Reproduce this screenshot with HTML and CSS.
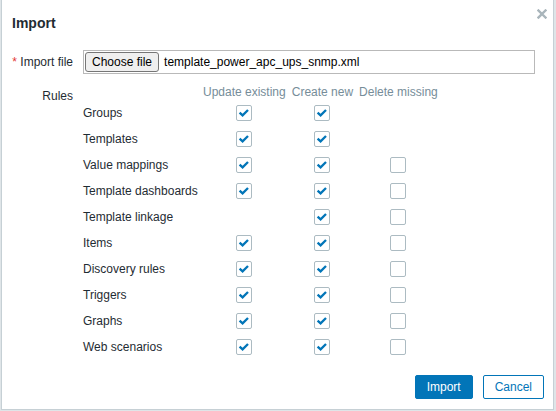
FILE: index.html
```html
<!DOCTYPE html>
<html>
<head>
<meta charset="utf-8">
<link rel="stylesheet" href="styles.css">
</head>
<body>
<div class="dialog">
  <div class="header">
    <h4 class="title">Import</h4>
    <button class="close" aria-label="Close">
      <svg width="10" height="10" viewBox="0 0 10 10"><path d="M1.5 1.5 L8.5 8.5 M8.5 1.5 L1.5 8.5" stroke="#a9b5bb" stroke-width="2.4" stroke-linecap="square"/></svg>
    </button>
  </div>
  <div class="body">
    <div class="form">
      <div class="label"><span class="req">*</span> Import file</div>
      <div class="field">
        <div class="file">
          <span class="choose">Choose file</span>
          <span class="fname">template_power_apc_ups_snmp.xml</span>
        </div>
      </div>
      <div class="label rules-label">Rules</div>
      <div class="field">
        <div class="rules">
          <div class="rh"></div>
          <div class="rh col">Update existing</div>
          <div class="rh col">Create new</div>
          <div class="rh col">Delete missing</div>

          <div class="rl">Groups</div>
          <div class="rc"><span class="cb on"></span></div>
          <div class="rc"><span class="cb on"></span></div>
          <div class="rc"></div>

          <div class="rl">Templates</div>
          <div class="rc"><span class="cb on"></span></div>
          <div class="rc"><span class="cb on"></span></div>
          <div class="rc"></div>

          <div class="rl">Value mappings</div>
          <div class="rc"><span class="cb on"></span></div>
          <div class="rc"><span class="cb on"></span></div>
          <div class="rc"><span class="cb"></span></div>

          <div class="rl">Template dashboards</div>
          <div class="rc"><span class="cb on"></span></div>
          <div class="rc"><span class="cb on"></span></div>
          <div class="rc"><span class="cb"></span></div>

          <div class="rl">Template linkage</div>
          <div class="rc"></div>
          <div class="rc"><span class="cb on"></span></div>
          <div class="rc"><span class="cb"></span></div>

          <div class="rl">Items</div>
          <div class="rc"><span class="cb on"></span></div>
          <div class="rc"><span class="cb on"></span></div>
          <div class="rc"><span class="cb"></span></div>

          <div class="rl">Discovery rules</div>
          <div class="rc"><span class="cb on"></span></div>
          <div class="rc"><span class="cb on"></span></div>
          <div class="rc"><span class="cb"></span></div>

          <div class="rl">Triggers</div>
          <div class="rc"><span class="cb on"></span></div>
          <div class="rc"><span class="cb on"></span></div>
          <div class="rc"><span class="cb"></span></div>

          <div class="rl">Graphs</div>
          <div class="rc"><span class="cb on"></span></div>
          <div class="rc"><span class="cb on"></span></div>
          <div class="rc"><span class="cb"></span></div>

          <div class="rl">Web scenarios</div>
          <div class="rc"><span class="cb on"></span></div>
          <div class="rc"><span class="cb on"></span></div>
          <div class="rc"><span class="cb"></span></div>
        </div>
      </div>
    </div>
  </div>
  <div class="footer">
    <button class="btn primary">Import</button>
    <button class="btn secondary">Cancel</button>
  </div>
</div>
</body>
</html>
```
FILE: styles.css
```css
html, body {
  margin: 0;
  padding: 0;
}
body {
  background: #dfe5e8;
  font-family: "Liberation Sans", Arial, sans-serif;
  font-size: 12px;
  color: #1f2c33;
  height: 411px;
  overflow: hidden;
}
.dialog {
  box-sizing: border-box;
  width: 553px;
  margin-left: 1px;
  background: #ffffff;
  border: 1px solid #c6d0d5;
  border-top: 0;
}
.header {
  position: relative;
  padding: 14px 10px 0;
}
.title {
  margin: 0;
  font-size: 14px;
  font-weight: bold;
  line-height: 18px;
  color: #1f2c33;
}
.close {
  position: absolute;
  top: 8px;
  right: 5px;
  width: 12px;
  height: 12px;
  padding: 1px;
  border: 0;
  background: transparent;
  line-height: 0;
}
.body {
  padding: 18px 10px 0;
}
.form {
  display: grid;
  grid-template-columns: 61px 1fr;
  column-gap: 10px;
  row-gap: 10px;
}
.label {
  text-align: right;
  line-height: 14px;
  padding-top: 5px;
  white-space: nowrap;
}
.req {
  color: #e33734;
}
.file {
  box-sizing: border-box;
  width: 452px;
  height: 24px;
  border: 1px solid #b9b9b9;
  padding: 1px;
  display: flex;
  align-items: center;
}
.choose {
  box-sizing: border-box;
  height: 20px;
  line-height: 18px;
  padding: 0 6px;
  background: #efefef;
  border: 1px solid #767676;
  border-radius: 3px;
  color: #000000;
}
.fname {
  margin-left: 5px;
  color: #000000;
}
.rules {
  display: grid;
  grid-template-columns: 114px auto auto auto;
  column-gap: 6px;
  justify-content: start;
}
.rh {
  line-height: 16px;
  color: #768d99;
  white-space: nowrap;
}
.col {
  text-align: center;
}
.rl {
  height: 26px;
  line-height: 26px;
  white-space: nowrap;
}
.rc {
  height: 26px;
  display: flex;
  align-items: center;
  justify-content: center;
}
.cb {
  box-sizing: border-box;
  width: 16px;
  height: 16px;
  border: 1px solid #acbbc2;
  border-radius: 2px;
  background: #ffffff;
  margin-left: -1px;
}
.cb.on {
  background-image: url("data:image/svg+xml;utf8,<svg xmlns='http://www.w3.org/2000/svg' width='14' height='14' viewBox='0 0 14 14'><path d='M2.6 6.6 L5.6 9.4 L11 4' fill='none' stroke='%230275b8' stroke-width='2.3'/></svg>");
  background-repeat: no-repeat;
  background-position: 0 0;
}
.footer {
  display: flex;
  justify-content: flex-end;
  gap: 10px;
  padding: 15px 9px 10px;
}
.btn {
  box-sizing: border-box;
  height: 24px;
  padding: 0 11px;
  border: 1px solid #0275b8;
  border-radius: 2px;
  font-family: "Liberation Sans", Arial, sans-serif;
  font-size: 12px;
  line-height: 22px;
}
.primary {
  background: #0275b8;
  color: #ffffff;
}
.secondary {
  background: #ffffff;
  color: #0275b8;
}
```
